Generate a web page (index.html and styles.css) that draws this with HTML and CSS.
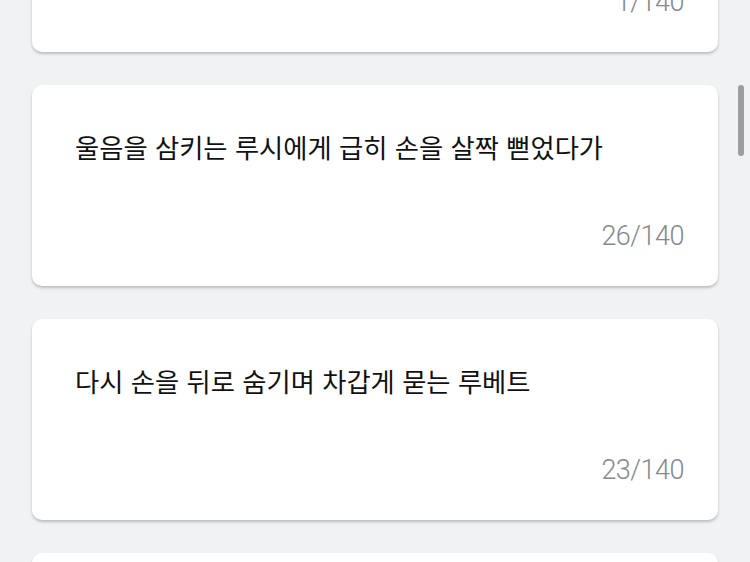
FILE: index.html
```html
<!DOCTYPE html>
<html lang="ko">
<head>
<meta charset="utf-8">
<link rel="stylesheet" href="styles.css">
</head>
<body>
<div class="viewport">
  <div class="list">
    <div class="card">
      <p class="line"></p>
      <span class="count">1/140</span>
    </div>
    <div class="card">
      <p class="line">울음을 삼키는 루시에게 급히 손을 살짝 뻗었다가</p>
      <span class="count">26/140</span>
    </div>
    <div class="card">
      <p class="line">다시 손을 뒤로 숨기며 차갑게 묻는 루베트</p>
      <span class="count">23/140</span>
    </div>
    <div class="card">
      <p class="line"></p>
      <span class="count"></span>
    </div>
  </div>
  <div class="scrollbar"></div>
</div>
</body>
</html>
```

FILE: styles.css
```css
html, body {
  margin: 0;
  padding: 0;
  height: 100%;
  overflow: hidden;
  background: #f1f2f4;
}
.viewport {
  position: relative;
  height: 562px;
  overflow: hidden;
}
.list {
  display: flex;
  flex-direction: column;
  gap: 33px;
  margin-top: -149px;
  padding: 0 32px;
}
.card {
  height: 201px;
  box-sizing: border-box;
  background: #fff;
  border-radius: 10px;
  box-shadow: 0 2px 3px rgba(0, 0, 0, 0.22);
  padding: 42px 34px 34px 43px;
  display: flex;
  flex-direction: column;
  justify-content: space-between;
}
.line {
  margin: 0;
  min-height: 40px;
  font-family: "Noto Sans CJK KR", "Noto Sans", sans-serif;
  font-weight: 400;
  font-size: 26.3px;
  line-height: 40px;
  color: #111;
}
.count {
  align-self: flex-end;
  font-family: "Roboto", "Noto Sans", sans-serif;
  font-weight: 300;
  font-size: 27px;
  line-height: 32px;
  letter-spacing: -0.5px;
  color: #85888e;
}
.scrollbar {
  position: absolute;
  left: 738px;
  top: 85px;
  width: 6px;
  height: 71px;
  border-radius: 3px;
  background: #9e9e9e;
}
```
